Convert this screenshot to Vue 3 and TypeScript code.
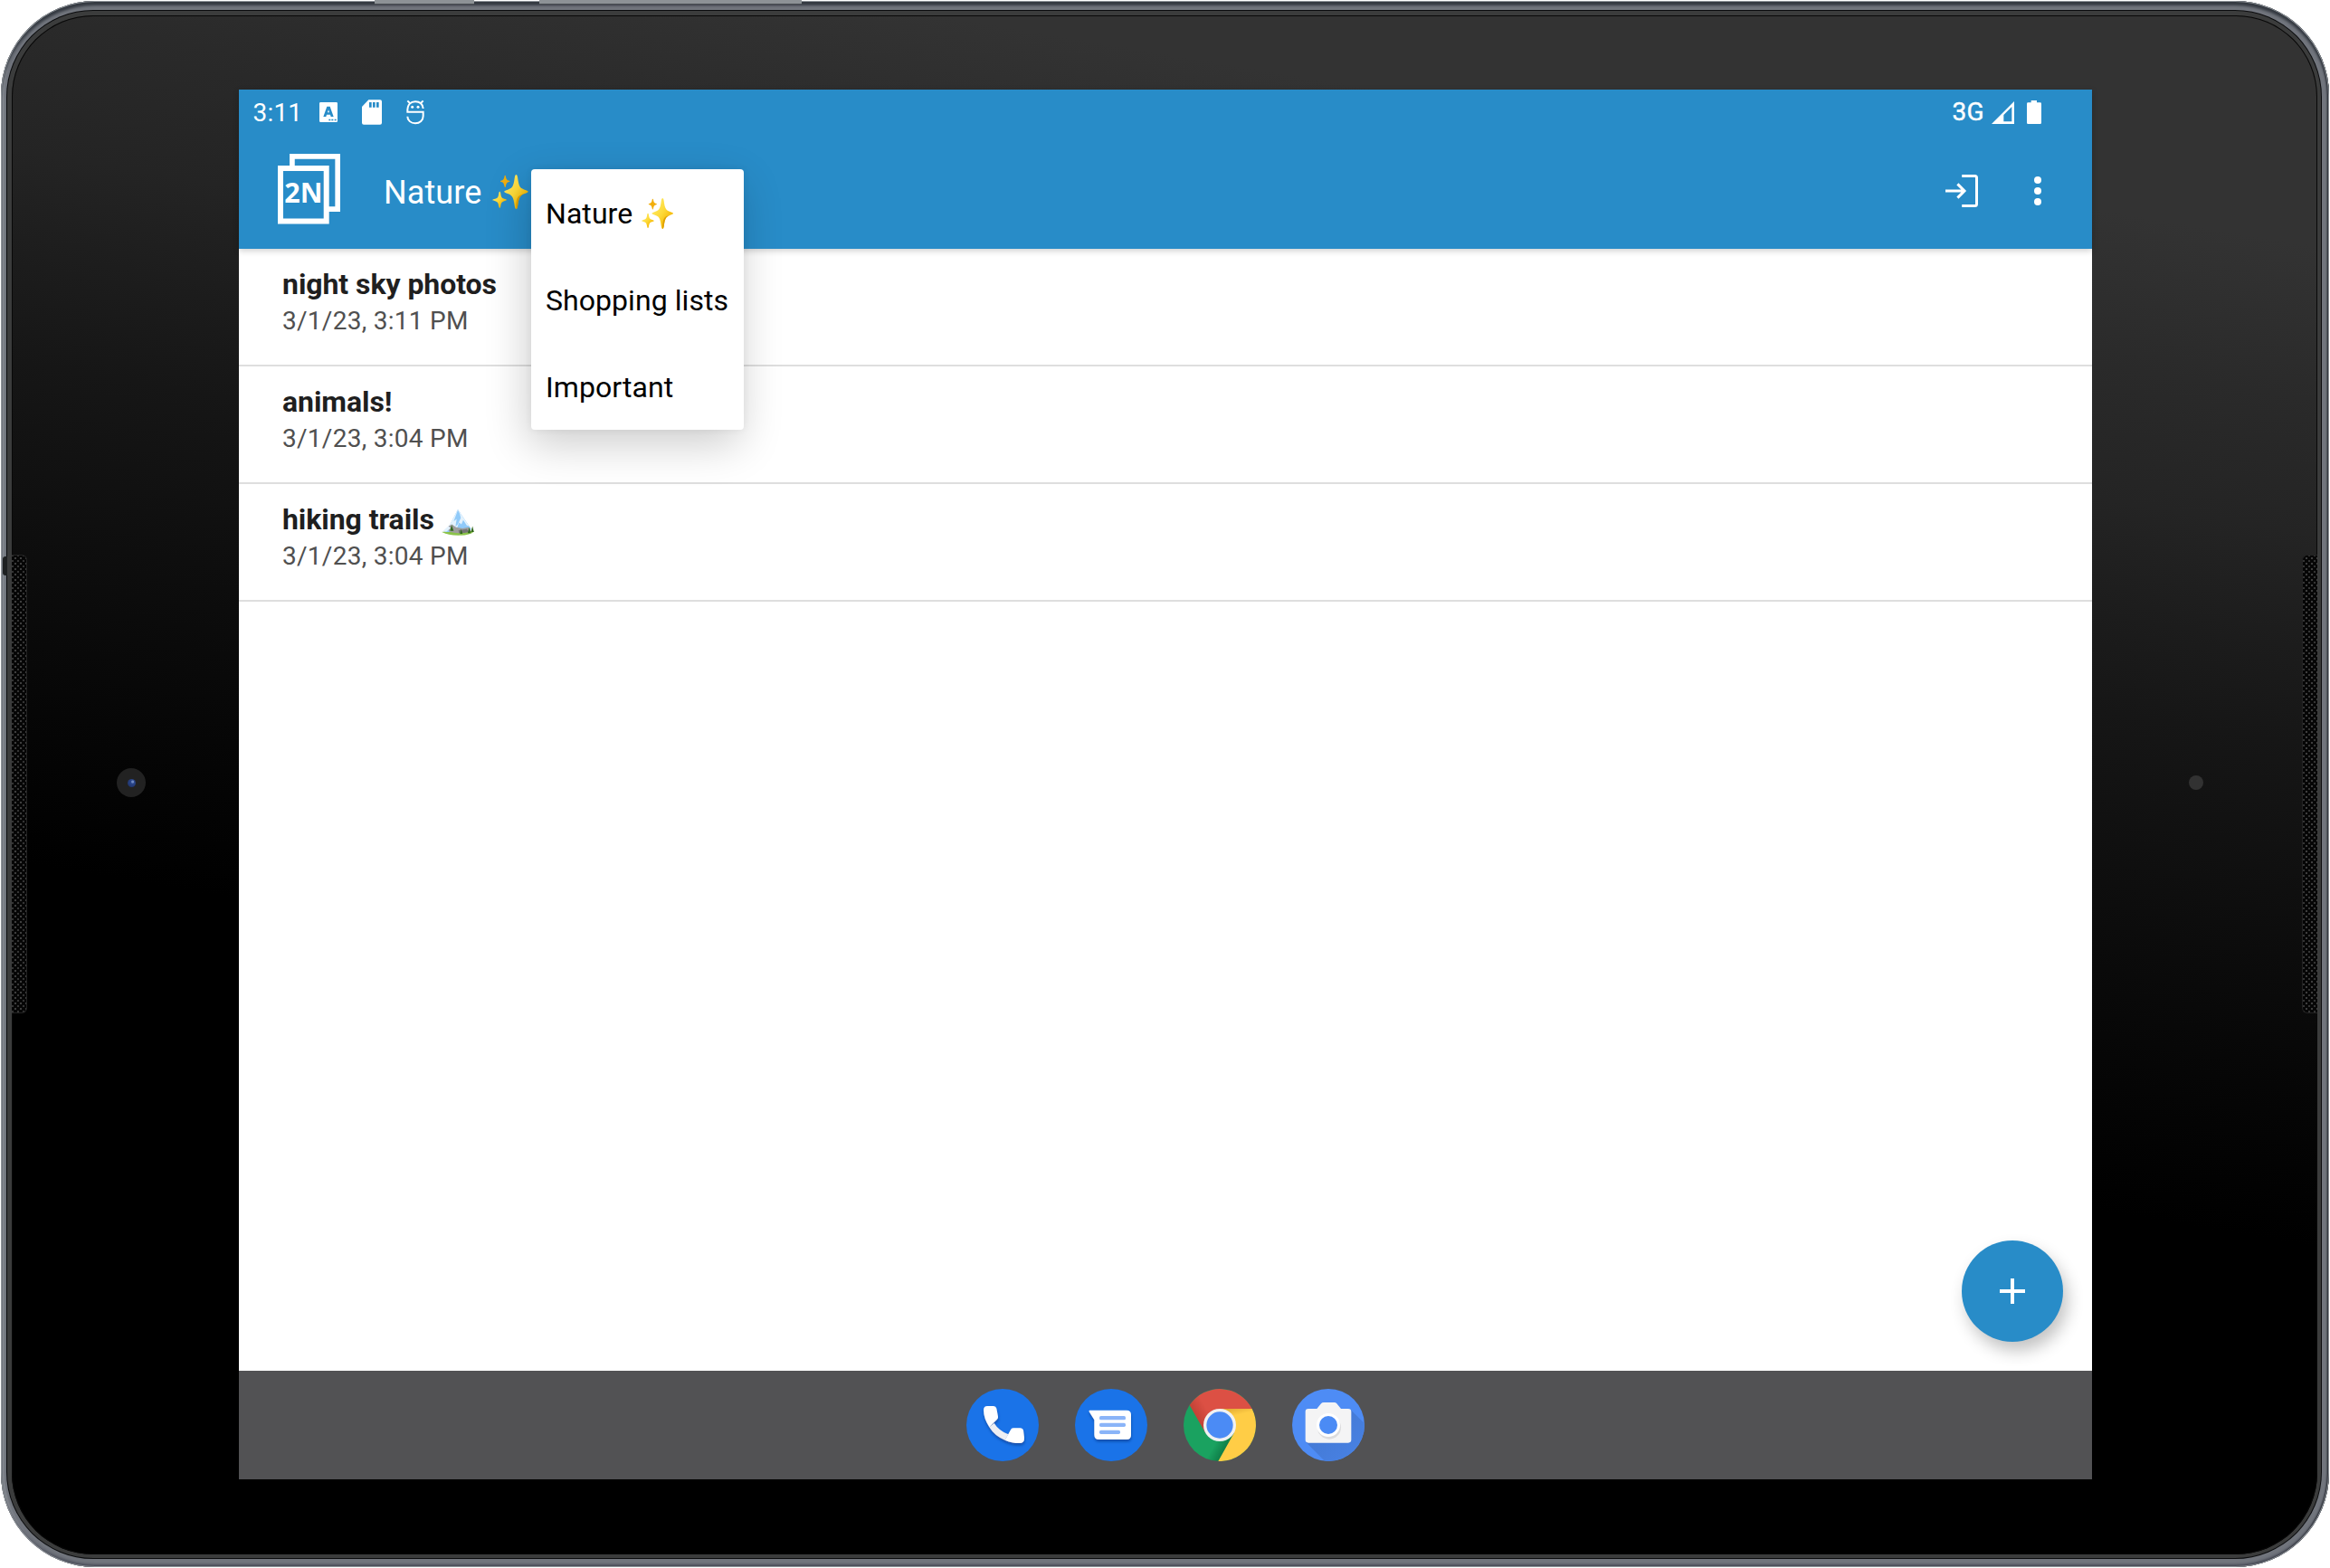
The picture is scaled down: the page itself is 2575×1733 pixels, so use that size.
<script setup lang="ts">
interface Note {
  title: string
  date: string
  mountain?: boolean
}

interface Category {
  name: string
  sparkles?: boolean
}

const notes: Note[] = [
  { title: 'night sky photos', date: '3/1/23, 3:11 PM' },
  { title: 'animals!', date: '3/1/23, 3:04 PM' },
  { title: 'hiking trails', date: '3/1/23, 3:04 PM', mountain: true },
]

const categories: Category[] = [
  { name: 'Nature', sparkles: true },
  { name: 'Shopping lists' },
  { name: 'Important' },
]
</script>

<template>
  <div class="page">
    <svg width="0" height="0" class="defs" aria-hidden="true">
      <defs>
        <linearGradient id="gold" x1="0" y1="0" x2="1" y2="1">
          <stop offset="0" stop-color="#fff176" />
          <stop offset="0.5" stop-color="#fdd835" />
          <stop offset="0.8" stop-color="#f4b400" />
        </linearGradient>
        <symbol id="sparkles" viewBox="0 0 119 115">
          <path fill="url(#gold)" d="M79 0C81 0 83 3 84 10C88 42 92 46 112 52C117 54 119 55 119 57C119 59 117 60 112 62C92 68 88 74 84 105C83 112 81 115 79 115C77 115 75 112 74 105C70 74 66 68 46 62C41 60 39 59 39 57C39 55 41 54 46 52C66 46 70 42 74 10C75 3 77 0 79 0Z" />
          <path fill="#e0a100" d="M84 105C83 112 81 115 79 115C78 106 79 84 85 75C89 69 98 65 106 64C92 70 88 76 84 105Z" />
          <path fill="#f2ae0c" d="M42 2C43 2 44 3 44 5C46 16 48 18 55 20C57 21 58 22 58 22C58 23 57 24 55 24C48 26 46 29 44 39C44 41 43 42 42 42C41 42 40 41 40 39C38 29 36 26 29 24C27 24 26 23 26 22C26 22 27 21 29 20C36 18 38 16 40 5C40 3 41 2 42 2Z" />
          <path fill="url(#gold)" d="M24 57C25 57 26 58 27 62C29 77 31 79 43 82C46 83 47 84 47 85C47 86 46 87 43 87C31 91 29 93 27 107C26 111 25 112 24 112C23 112 22 111 21 107C19 93 17 91 5 87C2 87 0 86 0 85C0 84 2 83 5 82C17 79 19 77 21 62C22 58 23 57 24 57Z" />
        </symbol>
      </defs>
    </svg>

    <div class="tablet">
      <i class="key power"></i>
      <i class="key volume"></i>
      <i class="jack"></i>
      <div class="groove">
        <div class="lip">
          <div class="glass">
            <i class="grille left"></i>
            <i class="grille right"></i>
            <i class="camera"><i></i></i>
            <i class="sensor"></i>

            <main class="screen">
              <header class="top">
                <div class="status">
                  <span class="clock">3:11</span>
                  <svg class="s-key" viewBox="0 0 60 66">
                    <path fill="#fff" fill-rule="evenodd" d="M4 0H56Q60 0 60 4V62Q60 66 56 66H4Q0 66 0 62V4Q0 0 4 0ZM25 14L13 48H22L24 41H36L38 48H47L35 14ZM30 25L33 34H27Z" />
                    <path fill="#288cc8" d="M31 56h6v5h-6zM40 56h6v5h-6zM50 56h6v5h-6z" />
                  </svg>
                  <svg class="s-sd" viewBox="0 0 66 82">
                    <path fill="#fff" d="M22 0H60Q66 0 66 6V76Q66 82 60 82H6Q0 82 0 76V23Z" />
                    <path fill="#288cc8" d="M24 8h8v17h-8zM36 8h8v17h-8zM48 8h8v17h-8z" />
                  </svg>
                  <svg class="s-bug" viewBox="0 0 60 82">
                    <g fill="none" stroke="#fff" stroke-width="6">
                      <path d="M56 29C54 12 44 6 30 6S3 13 4 40H56V54C56 68 45 78 30 78S4 68 4 55" />
                      <path d="M4 3L12 11M56 3L48 11" />
                    </g>
                    <circle cx="20" cy="24" r="4.5" fill="#fff" />
                    <circle cx="39" cy="24" r="4.5" fill="#fff" />
                  </svg>
                  <span class="net">3G</span>
                  <svg class="s-signal" viewBox="0 0 75 75">
                    <path fill="#fff" fill-rule="evenodd" d="M75 0V75H0ZM67 18V67H40V45Z" />
                  </svg>
                  <svg class="s-battery" viewBox="0 0 48 78">
                    <path fill="#fff" d="M14 0H33V7H44Q48 7 48 11V74Q48 78 44 78H4Q0 78 0 74V11Q0 7 4 7H14Z" />
                  </svg>
                </div>

                <div class="appbar">
                  <svg class="logo" viewBox="0 0 69 78">
                    <path fill="none" stroke="#fff" stroke-width="5.7" d="M15.9 14V2.9H66.2V61.2H56" />
                    <path fill="none" stroke="#fff" stroke-width="6" d="M3 16H53.7V74.6H3Z" />
                    <text x="7.2" y="54" fill="#fff">2N</text>
                  </svg>
                  <h1>Nature</h1>
                  <svg class="title-emoji"><use href="#sparkles" /></svg>
                  <svg class="enter" viewBox="0 0 36 36">
                    <path fill="none" stroke="#fff" stroke-width="3" d="M18.2 1.5H32.5Q34.5 1.5 34.5 3.5V32.5Q34.5 34.5 32.5 34.5H18.2" />
                    <path fill="none" stroke="#fff" stroke-width="3" d="M0 18H21M13.4 10.4L21 18L13.4 25.6" />
                  </svg>
                  <svg class="dots" viewBox="0 0 8 32">
                    <circle cx="4" cy="4" r="4" fill="#fff" />
                    <circle cx="4" cy="16" r="4" fill="#fff" />
                    <circle cx="4" cy="28" r="4" fill="#fff" />
                  </svg>
                </div>
              </header>

              <section class="list">
                <article v-for="note in notes" :key="note.title" class="note">
                  <h2>
                    {{ note.title }}
                    <svg v-if="note.mountain" class="mountain" viewBox="0 0 108 88">
                      <path fill="#8bc34a" d="M0 76Q50 62 108 74Q96 87 56 87Q20 87 0 76Z" />
                      <path fill="#90caf9" d="M54 0L99 66L92 76H10L26 54Z" />
                      <path fill="#e3f2fd" d="M54 0L26 54L50 66L58 44L66 50L72 36L84 54L92 56Z" />
                      <path fill="#90caf9" d="M54 2L40 40L50 32L46 58L54 50L64 28L60 14Z" />
                      <path fill="#9e9e9e" d="M22 57L34 50L48 60L70 64L90 60L98 72Q60 86 24 74Z" />
                      <path fill="#757575" d="M56 70L84 66L92 76Q74 80 58 80Z" />
                      <path fill="#e3f2fd" d="M2 74L22 56L30 62L16 74Z" />
                      <path fill="#33691e" d="M33 52L40 72H28ZM65 66L70 82H61ZM92 60L98 80H87ZM103 56L108 76H98Z" />
                    </svg>
                  </h2>
                  <p>{{ note.date }}</p>
                </article>
              </section>

              <nav class="dock">
                <svg viewBox="0 0 240 240">
                  <defs>
                    <filter id="soft" x="-20%" y="-20%" width="150%" height="150%">
                      <feDropShadow dx="1" dy="7" stdDeviation="4" flood-color="#0b3f94" flood-opacity="0.75" />
                    </filter>
                  </defs>
                  <circle cx="120" cy="120" r="120" fill="#1a73e8" />
                  <g filter="url(#soft)">
                    <path fill="#eeeff3" d="M76 127L92 114Q108 139 139 151L128 170Q94 157 76 127Z" />
                    <path fill="#fff" d="M70 57H90Q98 57 100 65L105 92Q106 98 101 102L76 127Q57 98 57 70Q57 57 70 57Z" />
                    <path fill="#fff" d="M128 170L146 137Q149 130 156 130H178Q187 130 189 138L192 162Q193 180 176 180Q150 180 128 170Z" />
                  </g>
                </svg>
                <svg viewBox="0 0 240 240">
                  <circle cx="120" cy="120" r="120" fill="#1a73e8" />
                  <path filter="url(#soft)" fill="#fff" d="M49 71H171Q186 71 186 86V153Q186 168 171 168H80Q64 168 64 152V103L47 76Q45 71 49 71Z" />
                  <g fill="#8ab4f8">
                    <rect x="81" y="90" width="87" height="13" rx="5" />
                    <rect x="81" y="113" width="87" height="13" rx="5" />
                    <rect x="81" y="137" width="69" height="13" rx="5" />
                  </g>
                </svg>
                <svg viewBox="0 0 240 240">
                  <defs>
                    <linearGradient id="red" gradientUnits="userSpaceOnUse" x1="35" y1="110" x2="85" y2="80">
                      <stop offset="0" stop-color="#b93d31" />
                      <stop offset="1" stop-color="#dc5044" />
                    </linearGradient>
                    <linearGradient id="yellow" gradientUnits="userSpaceOnUse" x1="150" y1="66" x2="156" y2="92">
                      <stop offset="0" stop-color="#e2ac35" />
                      <stop offset="1" stop-color="#ffcd46" />
                    </linearGradient>
                    <linearGradient id="green" gradientUnits="userSpaceOnUse" x1="102" y1="186" x2="134" y2="204">
                      <stop offset="0" stop-color="#1aa260" />
                      <stop offset="1" stop-color="#0f7f49" />
                    </linearGradient>
                  </defs>
                  <circle cx="120" cy="120" r="120" fill="url(#green)" />
                  <path fill="url(#yellow)" d="M120 66H227A120 120 0 0 1 115 240L167 147Z" />
                  <path fill="url(#red)" d="M20 54A120 120 0 0 1 227 66H120L73 147Z" />
                  <circle cx="120" cy="120" r="54" fill="#f1f1f1" />
                  <circle cx="120" cy="120" r="44" fill="#4b8bf5" />
                </svg>
                <svg viewBox="0 0 240 240">
                  <defs>
                    <linearGradient id="cast" x1="0" y1="0" x2="1" y2="1">
                      <stop offset="0.3" stop-color="#447ad6" />
                      <stop offset="1" stop-color="#4a85ea" />
                    </linearGradient>
                    <clipPath id="disc"><circle cx="120" cy="120" r="120" /></clipPath>
                  </defs>
                  <circle cx="120" cy="120" r="120" fill="#4e8cf5" />
                  <path clip-path="url(#disc)" fill="url(#cast)" d="M194 69L270 145V270H138L46 177Z" />
                  <path fill="#f4f4f5" d="M54 66H82L96 49Q99 45 105 45H139Q145 45 148 49L162 66H186Q196 66 196 76V169Q196 179 186 179H54Q44 179 44 169V76Q44 66 54 66Z" />
                  <circle cx="123" cy="128" r="39" fill="#dcdcde" />
                  <circle cx="120" cy="120" r="39" fill="#fff" />
                  <circle cx="120" cy="120" r="30" fill="#4b8bf5" />
                </svg>
              </nav>

              <button class="fab" aria-label="Add note">
                <svg viewBox="0 0 28 28"><path stroke="#fff" stroke-width="4" d="M0 14H28M14 0V28" /></svg>
              </button>

              <ul class="menu">
                <li v-for="c in categories" :key="c.name">
                  {{ c.name }}
                  <svg v-if="c.sparkles"><use href="#sparkles" /></svg>
                </li>
              </ul>
            </main>
          </div>
        </div>
      </div>
    </div>
  </div>
</template>

<style>
html,
body {
  margin: 0;
  background: #fff;
}
</style>

<style scoped>
* {
  box-sizing: border-box;
}
.page {
  width: 2575px;
  height: 1733px;
  overflow: hidden;
  padding: 1px;
  font-family: Roboto, 'Liberation Sans', sans-serif;
}
.defs {
  position: absolute;
}
svg {
  display: block;
  flex: none;
}
.tablet {
  position: relative;
  width: 2573px;
  height: 1731px;
  padding: 10px 8px 9px 6px;
  border-radius: 104px;
  background: #71757d;
  box-shadow:
    inset 0 0 0 1px #8f9499,
    inset 0 4px 3px 1px #343941,
    inset -2px 0 2px #23262d,
    inset 0 -3px 3px #4a4d59,
    inset 3px 0 2px #a0a5ab;
}
.key {
  position: absolute;
  top: -1px;
  height: 5px;
  background: #8d9296;
  border-bottom: 1px solid #4b4f54;
}
.power {
  left: 413px;
  width: 110px;
}
.volume {
  left: 595px;
  width: 290px;
}
.jack {
  position: absolute;
  left: 2px;
  top: 614px;
  width: 5px;
  height: 21px;
  border-radius: 3px 0 0 3px;
  background: #1e2021;
}
.groove {
  height: 100%;
  padding: 1px;
  border-radius: 96px;
  background: #0b0c0e;
}
.lip {
  height: 100%;
  padding: 5px 4px 4px 5px;
  border-radius: 95px;
  background: #3b3c3c;
}
.glass {
  position: relative;
  height: 100%;
  padding: 82px 0 0 251px;
  border-radius: 90px;
  box-shadow: inset 0 0 0 1px #080808;
  background: linear-gradient(189.5deg, #333 0%, #333 12%, #2a2a2a 20%, #242424 27%, #1c1c1c 33%, #161616 38%, #0d0d0d 48%, #060606 56%, #000 64%);
}
.grille {
  position: absolute;
  top: 596px;
  height: 507px;
  width: 17px;
  border: 1px solid #222;
  background-color: #050505;
  background-image: radial-gradient(circle, #3e3e3e 1px, transparent 1.6px), radial-gradient(circle, #343434 1px, transparent 1.6px);
  background-size: 6px 6px;
  background-position: 1px 0, 4px 3px;
}
.grille.left {
  left: 0;
  border-left: 0;
  border-radius: 0 6px 6px 0;
}
.grille.right {
  right: 0;
  border-right: 0;
  border-radius: 6px 0 0 6px;
}
.camera {
  position: absolute;
  left: 116px;
  top: 832px;
  width: 32px;
  height: 32px;
  padding: 12px;
  border-radius: 50%;
  background: #222;
}
.camera i {
  display: block;
  width: 9px;
  height: 9px;
  border-radius: 50%;
  background: radial-gradient(circle at 62% 34%, #6f8ac4 0 1px, #2a468c 2px, #1b2c5c);
}
.sensor {
  position: absolute;
  left: 2406px;
  top: 840px;
  width: 16px;
  height: 16px;
  border-radius: 50%;
  background: #323232;
}
.screen {
  position: relative;
  width: 2048px;
  height: 1536px;
  display: flex;
  flex-direction: column;
  background: #fff;
}
.top {
  background: #288cc8;
  color: #fff;
  box-shadow: 0 2px 7px rgba(0, 0, 0, 0.2);
}
.status {
  height: 48px;
  display: flex;
  align-items: center;
  padding: 2px 56px 0 15.5px;
}
.clock {
  width: 73.5px;
  padding-top: 1px;
  font-size: 28px;
  letter-spacing: 0.2px;
}
.s-key {
  width: 20px;
  height: 22px;
  margin-right: 27px;
}
.s-sd {
  width: 22px;
  height: 28px;
  margin-right: 27px;
}
.s-bug {
  width: 20px;
  height: 28px;
  margin-top: -1px;
}
.net {
  margin-left: auto;
  margin-top: -2px;
  margin-right: 8px;
  font-size: 28px;
  font-weight: 400;
  letter-spacing: 0.3px;
  -webkit-text-stroke: 0.4px #fff;
}
.s-signal {
  width: 25px;
  height: 25px;
  margin-right: 14px;
}
.s-battery {
  width: 16px;
  height: 26px;
}
.appbar {
  height: 128px;
  display: flex;
  align-items: center;
  padding: 0 56px 0 43px;
}
.logo {
  width: 69px;
  height: 78px;
  margin-top: -4px;
}
.logo text {
  font: 700 30.5px 'Open Sans', 'Noto Sans', sans-serif;
}
h1 {
  width: 120px;
  margin: 3px 0 0 48px;
  font-size: 36px;
  font-weight: 400;
  letter-spacing: 0.1px;
}
.title-emoji {
  width: 40px;
  height: 38px;
  margin-top: 1px;
}
.enter {
  width: 36px;
  height: 36px;
  margin-left: auto;
  margin-right: 62px;
}
.dots {
  width: 8px;
  height: 32px;
}
.list {
  flex: 1;
}
.note {
  height: 130px;
  padding: 20px 48px 0;
  border-bottom: 2px solid #dedede;
}
.note h2 {
  display: flex;
  align-items: center;
  margin: 0;
  font-size: 32px;
  line-height: 38px;
  font-weight: 700;
  letter-spacing: -0.06px;
  color: #1f1f1f;
}
.mountain {
  width: 36px;
  height: 29px;
  margin: 6px 0 0 8px;
}
.note p {
  margin: 4px 0 0;
  font-size: 28px;
  line-height: 36px;
  letter-spacing: 0.28px;
  color: #505050;
}
.dock {
  height: 120px;
  display: flex;
  align-items: center;
  justify-content: center;
  gap: 40px;
  background: #525254;
}
.dock svg {
  width: 80px;
  height: 80px;
}
.fab {
  position: absolute;
  left: 1904px;
  top: 1272px;
  width: 112px;
  height: 112px;
  display: grid;
  place-items: center;
  border: 0;
  border-radius: 50%;
  background: #288cc8;
  box-shadow: 5px 10px 18px rgba(0, 0, 0, 0.24);
}
.fab svg {
  width: 28px;
  height: 28px;
}
.menu {
  position: absolute;
  left: 323px;
  top: 88px;
  width: 235px;
  margin: 0;
  padding: 0;
  list-style: none;
  border-radius: 4px;
  background: #fff;
  color: #000;
  box-shadow: -4px 16px 48px rgba(0, 0, 0, 0.2), 0 0 8px rgba(0, 0, 0, 0.06);
}
.menu li {
  height: 96px;
  display: flex;
  align-items: center;
  padding: 2px 16px 0;
  font-size: 32px;
  letter-spacing: 0.06px;
  white-space: nowrap;
}
.menu svg {
  width: 35px;
  height: 34px;
  margin-left: 10px;
}
</style>
